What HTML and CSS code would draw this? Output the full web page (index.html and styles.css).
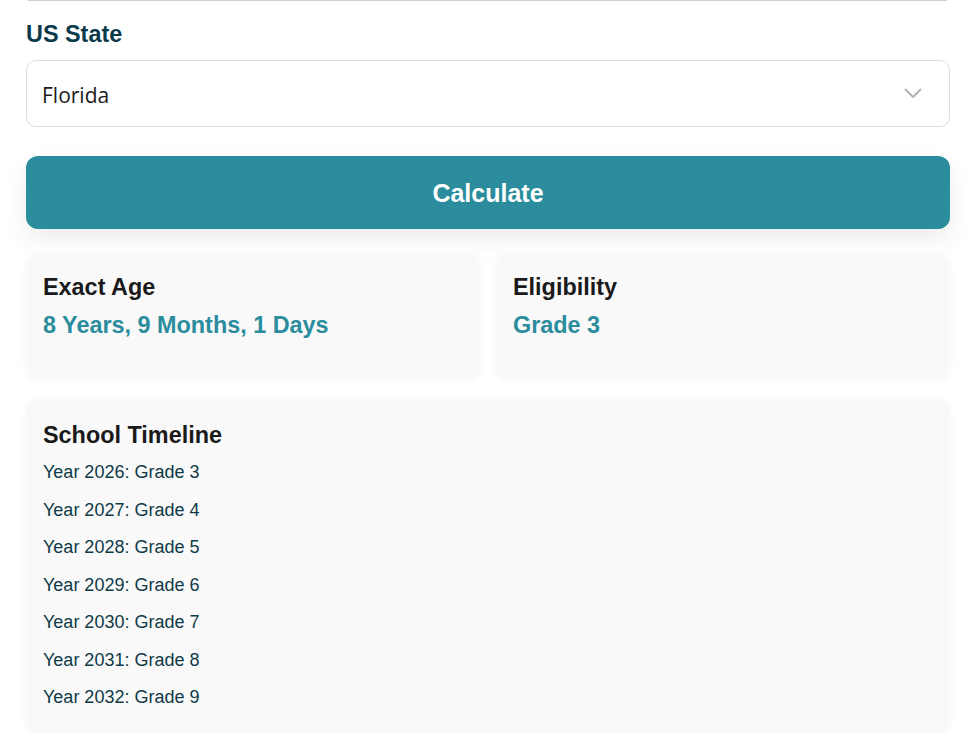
FILE: index.html
```html
<!doctype html>
<html lang="en">
  <head>
    <meta charset="UTF-8" />
    <meta name="viewport" content="width=device-width, initial-scale=1.0" />
    <title>School Grade Calculator</title>
    <link rel="stylesheet" href="styles.css">
  </head>
  <body>
    <div class="calculator">
      <div class="prev-field"></div>

      <div class="form-group">
        <label class="field-label">US State</label>
        <div class="select-box">
          <span>Florida</span>
          <svg class="chevron" width="18" height="11" viewBox="0 0 18 11">
            <path d="M1.5 1.5 L9 9 L16.5 1.5" fill="none" stroke="#b3b3b3" stroke-width="2" stroke-linecap="round" stroke-linejoin="round" />
          </svg>
        </div>
      </div>

      <button class="calc-btn">Calculate</button>

      <div class="result-grid">
        <div class="result-card">
          <h3>Exact Age</h3>
          <p class="result-value">8 Years, 9 Months, 1 Days</p>
        </div>
        <div class="result-card">
          <h3>Eligibility</h3>
          <p class="result-value">Grade 3</p>
        </div>
      </div>

      <div class="result-card timeline">
        <h3>School Timeline</h3>
        <ul class="timeline-list">
          <li>Year 2026: Grade 3</li>
          <li>Year 2027: Grade 4</li>
          <li>Year 2028: Grade 5</li>
          <li>Year 2029: Grade 6</li>
          <li>Year 2030: Grade 7</li>
          <li>Year 2031: Grade 8</li>
          <li>Year 2032: Grade 9</li>
        </ul>
      </div>
    </div>
  </body>
</html>
```

FILE: styles.css
```css
body {
  font-family: 'Liberation Sans', Arial, sans-serif;
  font-size: 18px;
  margin: 0;
  background-color: #fff;
}

.calculator {
  width: 924px;
  padding: 0 0 0 26px;
  display: flex;
  flex-direction: column;
}

/* bottom edge of the field scrolled above */
.prev-field {
  height: 0;
  margin: 0 3px 0 2px;
  border-bottom: 1px solid #cfcfcf;
}

.form-group {
  display: flex;
  flex-direction: column;
}

.field-label {
  margin-top: 20px;
  font-size: 1.3em;
  font-weight: bold;
  line-height: 27px;
  color: #0b3a4b;
}

.select-box {
  margin-top: 12px;
  box-sizing: border-box;
  height: 67px;
  padding: 0 27px 0 15px;
  border: 1px solid #dcdcdc;
  border-radius: 10px;
  display: flex;
  align-items: center;
  justify-content: space-between;
  font-family: 'Open Sans', 'Noto Sans', sans-serif;
  font-size: 21px;
  color: #1b1b1b;
}

.select-box span {
  padding-top: 3px;
}

.calc-btn {
  margin-top: 29px;
  height: 73px;
  padding-top: 2px;
  border: none;
  border-radius: 12px;
  background-color: #2a8c9c;
  color: #fff;
  font-family: 'Liberation Sans', Arial, sans-serif;
  font-size: 25px;
  font-weight: bold;
  box-shadow: 0 10px 24px rgba(0, 0, 0, 0.08);
  cursor: pointer;
}

.result-grid {
  margin-top: 25px;
  display: grid;
  grid-template-columns: 1fr 1fr;
  gap: 16px;
}

.result-card {
  box-sizing: border-box;
  background-color: #f9f9f9;
  border-radius: 12px;
  padding: 20px 17px 39px;
  box-shadow: 0 2px 8px rgba(0, 0, 0, 0.04);
}

.result-card h3 {
  margin: 0;
  font-size: 1.3em;
  line-height: 27px;
  color: #1a1a1a;
}

.result-value {
  margin: 11px 0 0;
  font-size: 1.3em;
  font-weight: bold;
  line-height: 27px;
  color: #2a8c9c;
}

.timeline {
  margin-top: 21px;
  padding: 23px 17px 16px;
}

.timeline-list {
  list-style: none;
  margin: 5px 0 0;
  padding: 0;
}

.timeline-list li {
  padding: 5px 0;
  line-height: 27.5px;
  color: #0f3a47;
}
```
